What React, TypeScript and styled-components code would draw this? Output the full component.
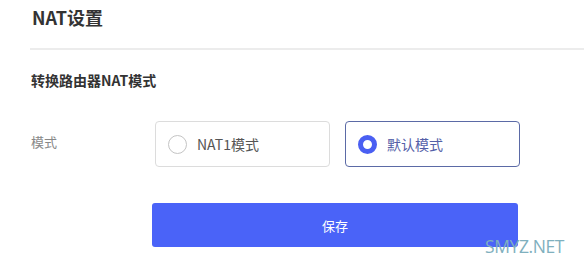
import React, { useState } from "react";
import styled, { createGlobalStyle } from "styled-components";

const Global = createGlobalStyle`
  html, body { margin: 0; padding: 0; background: #fff; }
  body { font-family: "Noto Sans CJK SC", "Microsoft YaHei", sans-serif; }
`;

const Page = styled.div`
  position: relative;
  width: 584px;
  height: 268px;
  overflow: hidden;
  background: #fff;
`;

const Header = styled.div`
  margin-left: 30px;
  padding: 4px 0 0 2px;
  height: 44px;
  border-bottom: 2px solid #ececec;
`;

const Title = styled.h1`
  margin: 0;
  font-size: 18px;
  font-weight: 700;
  color: #333;
  line-height: 26px;
`;

const Section = styled.div`
  padding: 19px 0 0 31px;
`;

const SubTitle = styled.h2`
  margin: 0;
  font-size: 14px;
  font-weight: 700;
  color: #333;
  line-height: 22px;
`;

const Row = styled.div`
  display: flex;
  align-items: center;
  margin-top: 30px;
`;

const Label = styled.div`
  width: 124px;
  font-size: 13px;
  line-height: 18px;
  color: #888;
  margin-top: -4px;
`;

const Options = styled.div`
  display: flex;
  gap: 15px;
`;

const Option = styled.button<{ $active: boolean }>`
  display: flex;
  align-items: center;
  gap: 10px;
  width: 175px;
  height: 46px;
  box-sizing: border-box;
  padding: 0 0 0 12px;
  border: 1px solid ${(p) => (p.$active ? "#5b6aa6" : "#dcdcdc")};
  border-radius: 4px;
  background: #fff;
  font-family: inherit;
  font-size: 14px;
  color: ${(p) => (p.$active ? "#5460a8" : "#555")};
  cursor: pointer;
`;

const Radio = styled.span<{ $active: boolean }>`
  width: 19px;
  height: 19px;
  box-sizing: border-box;
  border-radius: 50%;
  border: ${(p) => (p.$active ? "5px solid #4a5ff2" : "1px solid #c4c4c4")};
  background: #fff;
  flex: none;
`;

const SaveRow = styled.div`
  padding: 36px 0 0 152px;
`;

const SaveButton = styled.button`
  width: 366px;
  height: 44px;
  border: none;
  border-radius: 3px;
  background: #4a63f8;
  color: #fff;
  font-family: inherit;
  font-size: 13px;
  cursor: pointer;
`;

const Watermark = styled.div`
  position: absolute;
  left: 485px;
  top: 234px;
  font-family: "Open Sans", "Liberation Sans", sans-serif;
  font-size: 17.5px;
  color: #7fb0be;
  letter-spacing: -0.4px;
`;

export default function App() {
  const [mode, setMode] = useState<"nat1" | "default">("default");
  return (
    <Page>
      <Global />
      <Header>
        <Title>NAT设置</Title>
      </Header>
      <Section>
        <SubTitle>转换路由器NAT模式</SubTitle>
        <Row>
          <Label>模式</Label>
          <Options>
            <Option $active={mode === "nat1"} onClick={() => setMode("nat1")}>
              <Radio $active={mode === "nat1"} />
              NAT1模式
            </Option>
            <Option $active={mode === "default"} onClick={() => setMode("default")}>
              <Radio $active={mode === "default"} />
              默认模式
            </Option>
          </Options>
        </Row>
      </Section>
      <SaveRow>
        <SaveButton>保存</SaveButton>
      </SaveRow>
      <Watermark>SMYZ.NET</Watermark>
    </Page>
  );
}
